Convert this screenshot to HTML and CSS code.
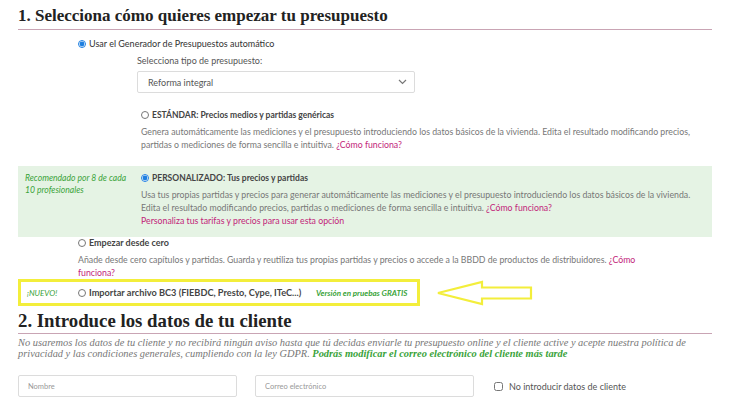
FILE: index.html
```html
<!DOCTYPE html>
<html lang="es">
<head>
    <meta charset="utf-8">
    <title>Nuevo presupuesto</title>
    <link rel="stylesheet" href="styles.css">
</head>
<body>
    <div class="page">
        <!-- paso 1 -->
        <h2 class="step_title">1. Selecciona cómo quieres empezar tu presupuesto</h2>

        <div class="option_row main_opt">
            <div class="side_note"></div>
            <div class="opt_body">
                <label class="opt_label"><input type="radio" name="modo" checked> Usar el Generador de Presupuestos automático</label>
                <div class="sub_block">
                    <p class="field_hint">Selecciona tipo de presupuesto:</p>
                    <div class="select_box">
                        <span>Reforma integral</span>
                        <svg width="9" height="6" viewBox="0 0 9 6"><path d="M1 1l3.5 3.5L8 1" fill="none" stroke="#777" stroke-width="1.2"/></svg>
                    </div>
                </div>
            </div>
        </div>

        <div class="option_row sub_opt">
            <div class="side_note"></div>
            <div class="opt_body">
                <label class="opt_label bold small"><input type="radio" name="gen"> ESTÁNDAR: Precios medios y partidas genéricas</label>
                <p class="opt_desc">Genera automáticamente las mediciones y el presupuesto introduciendo los datos básicos de la vivienda. Edita el resultado modificando precios, partidas o mediciones de forma sencilla e intuitiva. <a href="#">¿Cómo funciona?</a></p>
            </div>
        </div>

        <div class="option_row sub_opt recommended">
            <div class="side_note green_note">Recomendado por 8 de cada<br>10 profesionales</div>
            <div class="opt_body">
                <label class="opt_label bold small"><input type="radio" name="gen" checked> PERSONALIZADO: Tus precios y partidas</label>
                <p class="opt_desc">Usa tus propias partidas y precios para generar automáticamente las mediciones y el presupuesto introduciendo los datos básicos de la vivienda. Edita el resultado modificando precios, partidas o mediciones de forma sencilla e intuitiva. <a href="#">¿Cómo funciona?</a><br><a href="#">Personaliza tus tarifas y precios para usar esta opción</a></p>
            </div>
        </div>

        <div class="option_row main_opt tight">
            <div class="side_note"></div>
            <div class="opt_body">
                <label class="opt_label bold"><input type="radio" name="modo"> Empezar desde cero</label>
                <p class="opt_desc">Añade desde cero capítulos y partidas. Guarda y reutiliza tus propias partidas y precios o accede a la BBDD de productos de distribuidores. <a href="#">¿Cómo funciona?</a></p>
            </div>
        </div>

        <div class="import_line">
            <div class="import_box">
                <span class="new_tag">¡NUEVO!</span>
                <label class="opt_label bold large"><input type="radio" name="modo"> Importar archivo BC3 (FIEBDC, Presto, Cype, ITeC...)</label>
                <span class="beta_tag">Versión en pruebas GRATIS</span>
            </div>
            <svg class="arrow" width="98" height="26" viewBox="0 0 98 26">
                <path d="M2 13 L46 2 L46 7.5 L95 7.5 L95 18.5 L46 18.5 L46 24 Z" fill="none" stroke="#f3ee3b" stroke-width="2.2" stroke-linejoin="miter"/>
            </svg>
        </div>

        <!-- paso 2 -->
        <h2 class="step_title second">2. Introduce los datos de tu cliente</h2>
        <p class="privacy">No usaremos los datos de tu cliente y no recibirá ningún aviso hasta que tú decidas enviarle tu presupuesto online y el cliente active y acepte nuestra política de privacidad y las condiciones generales, cumpliendo con la ley GDPR. <b>Podrás modificar el correo electrónico del cliente más tarde</b></p>

        <div class="client_fields">
            <input class="input_class" type="text" placeholder="Nombre">
            <input class="input_class" type="email" placeholder="Correo electrónico">
            <label class="no_client"><input type="checkbox"> No introducir datos de cliente</label>
        </div>
    </div>
</body>
</html>
```

FILE: styles.css
```css
body {
    margin: 0;
    background: #fff;
    font-family: Lato, "Open Sans", sans-serif;
    font-size: 9px;
    color: #333;
}

.page {
    width: 694px;
    padding: 0 18px;
}

.step_title {
    margin: 0;
    padding: 6px 0 3px;
    font-family: "Liberation Serif", "DejaVu Serif", serif;
    font-size: 17px;
    font-weight: bold;
    color: #222;
    border-bottom: 1px solid #c9a4b4;
    line-height: 20px;
}

.step_title.second {
    padding: 5px 0 2px;
    font-size: 18.8px;
}

.option_row {
    display: grid;
    grid-template-columns: 60px 1fr;
}

.sub_opt {
    grid-template-columns: 123px 1fr;
    padding-top: 16px;
}

.main_opt {
    padding-top: 8px;
}

.main_opt.tight {
    padding-top: 0;
}

.recommended {
    background: #e5f3e4;
    margin-top: 15px;
    padding: 6px 0 10px 7px;
    grid-template-columns: 116px 1fr;
}

.side_note {
    line-height: 12px;
}

.green_note {
    color: #3aa33a;
    font-style: italic;
    font-size: 8.6px;
    white-space: nowrap;
}

.opt_label {
    display: flex;
    align-items: center;
    gap: 2px;
    line-height: 12px;
    color: #333;
}

.opt_label.bold {
    font-weight: bold;
    color: #444;
}

.opt_label.small {
    font-size: 8.5px;
}

.opt_label.large {
    font-size: 9.2px;
}

input[type="radio"] {
    width: 8px;
    height: 8px;
    margin: 0 1px 0 0;
    accent-color: #1e7fe0;
}

.sub_block {
    padding-left: 59px;
}

.field_hint {
    margin: 5px 0 4px;
    color: #555;
    line-height: 12px;
}

.select_box {
    width: 259px;
    height: 20px;
    border: 1px solid #dcdcdc;
    border-radius: 2px;
    display: flex;
    align-items: center;
    justify-content: space-between;
    padding: 0 7px 0 10px;
    color: #555;
}

.opt_desc {
    margin: 4px 0 0;
    max-width: 566px;
    font-size: 8.75px;
    color: #777;
    line-height: 13px;
}

.opt_desc a {
    color: #c2257a;
    text-decoration: none;
}

.import_line {
    display: flex;
    align-items: center;
    gap: 16px;
}

.import_box {
    width: 390px;
    height: 21px;
    border: 3px solid #f3ee3b;
    display: flex;
    align-items: center;
    padding-left: 6px;
}

.new_tag {
    width: 51px;
    color: #3aa33a;
    font-style: italic;
    font-size: 8px;
}

.import_box .opt_label {
    width: 238px;
}

.beta_tag {
    color: #3aa33a;
    font-style: italic;
    font-weight: bold;
    font-size: 8px;
}

.privacy {
    margin: 4px 0 0;
    font-family: "Liberation Serif", "DejaVu Serif", serif;
    font-style: italic;
    font-size: 10.4px;
    line-height: 10.5px;
    color: #777;
}

.privacy b {
    color: #3aa33a;
}

.client_fields {
    display: flex;
    align-items: center;
    margin-top: 16px;
}

.input_class {
    width: 219px;
    height: 22px;
    box-sizing: border-box;
    border: 1px solid #dcdcdc;
    border-radius: 2px;
    padding: 0 9px;
    font-family: Lato, sans-serif;
    font-size: 7.5px;
    margin-right: 18px;
}

.input_class::placeholder {
    color: #999;
}

.no_client {
    display: flex;
    align-items: center;
    gap: 4px;
    color: #555;
    margin-left: 2px;
}

.no_client input {
    width: 9px;
    height: 9px;
    margin: 0 2px 0 0;
}
```
